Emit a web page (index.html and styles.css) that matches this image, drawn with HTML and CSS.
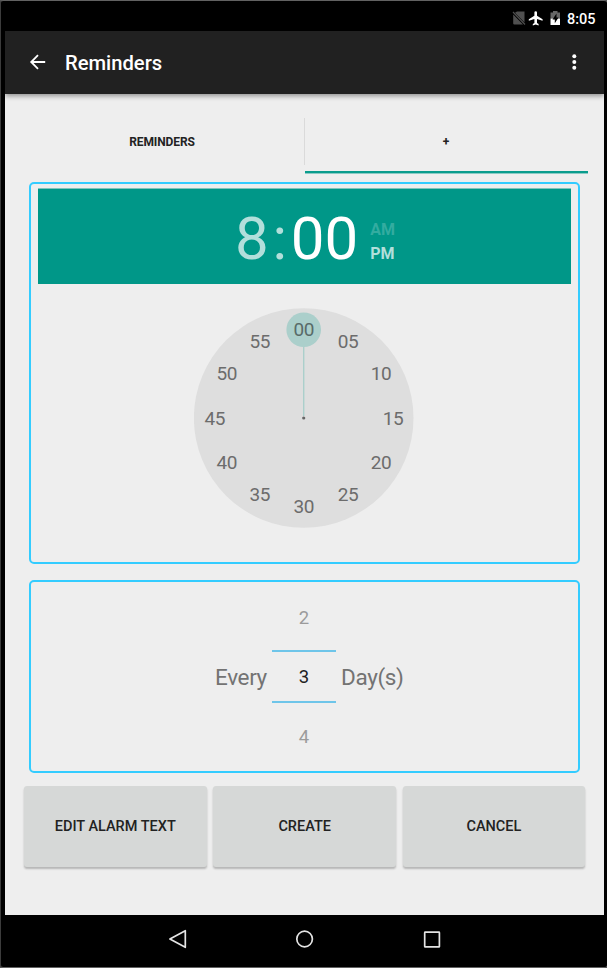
FILE: index.html
```html
<!DOCTYPE html>
<html lang="en">
<head>
<meta charset="utf-8">
<title>Reminders</title>
<link rel="stylesheet" href="styles.css">
</head>
<body>
<div class="device">
  <div class="status-bar">
    <svg class="status-icons" width="52" height="18" viewBox="0 0 52 18">
      <path d="M5 1.500H12.500V12.500L3 2.800Z M1.200 4.500L11 14.500H2.400Q1.200 14.500 1.200 13.500Z" fill="#505050"/>
      <path d="M1 2L13 14.500" stroke="#505050" stroke-width="1.200"/>
      <path d="M30.600 10.800V9.200L25 5.800V2.600Q25 1.200 23.700 1.200T22.400 2.600V5.800L16.800 9.200V10.800L22.400 9.100V12.900L20.800 14.100V15.400L23.700 14.600L26.600 15.400V14.100L25 12.900V9.100Z" fill="#fff"/>
      <path d="M38.500 2.500H41V1H45.500V2.500H48V8.500H38.500Z" fill="#666"/>
      <path d="M38.500 8.500H48V15H38.500Z" fill="#fff"/>
      <path d="M44.500 3.500L40.500 9.400H42.800V13.300L46.500 7.600H44.500Z" fill="#000"/>
    </svg>
    <span class="status-time">8:05</span>
  </div>
  <header class="app-bar">
    <svg class="back" width="18" height="18" viewBox="0 0 18 18"><path d="M16.200 9H2.200M9 2.200L2.200 9L9 15.800" fill="none" stroke="#fff" stroke-width="1.800"/></svg>
    <h1 class="title">Reminders</h1>
    <svg class="more" width="6" height="18" viewBox="0 0 6 18" fill="#fff"><circle cx="3.300" cy="3.200" r="2"/><circle cx="3.300" cy="9" r="2"/><circle cx="3.300" cy="14.800" r="2"/></svg>
  </header>
  <main class="content">
    <nav class="tabs">
      <div class="tab"><span>REMINDERS</span></div>
      <div class="tab tab-active"><span>+</span></div>
    </nav>
    <section class="card time-card">
      <div class="time-header">
        <span class="hour">8</span><span class="colon">:</span><span class="minute">00</span>
        <div class="ampm"><span class="am">AM</span><span class="pm">PM</span></div>
      </div>
      <svg class="clock" width="220" height="220" viewBox="-110 -110 220 220">
        <circle cx="-0.300" r="109.800" fill="#dedede"/>
        <circle cx="-0.300" cy="-88.300" r="17.300" fill="#abcfcb"/>
        <path d="M-0.300 -71.500V-2" stroke="#abcfcb" stroke-width="1.400"/>
        <circle cx="-0.300" r="1.600" fill="#666"/>
        <g class="clock-numbers">
          <text x="-0.300" y="-82" class="selected">00</text>
          <text x="44" y="-70">05</text>
          <text x="77" y="-37.800">10</text>
          <text x="89" y="7.200">15</text>
          <text x="77" y="51">20</text>
          <text x="44" y="83.300">25</text>
          <text x="-0.300" y="95.300">30</text>
          <text x="-44.300" y="83.300">35</text>
          <text x="-77.300" y="51">40</text>
          <text x="-89.300" y="7.200">45</text>
          <text x="-77.300" y="-37.800">50</text>
          <text x="-44.300" y="-70">55</text>
        </g>
      </svg>
    </section>
    <section class="card repeat-card">
      <span class="label every">Every</span>
      <div class="picker">
        <span class="option">2</span>
        <span class="option current">3</span>
        <span class="option last">4</span>
      </div>
      <span class="label days">Day(s)</span>
    </section>
    <div class="actions">
      <button class="button">EDIT ALARM TEXT</button>
      <button class="button">CREATE</button>
      <button class="button">CANCEL</button>
    </div>
  </main>
  <footer class="nav-bar">
    <svg width="20" height="20" viewBox="0 0 20 20"><path d="M17.300 1.700V18.300L1.900 10Z" fill="none" stroke="#e4e4e4" stroke-width="1.700" stroke-linejoin="round"/></svg>
    <svg width="20" height="20" viewBox="0 0 20 20"><circle cx="9.600" cy="10" r="7.800" fill="none" stroke="#e4e4e4" stroke-width="1.700"/></svg>
    <svg width="20" height="20" viewBox="0 0 20 20"><rect x="2.700" y="3.200" width="14.700" height="14.700" rx=".5" fill="none" stroke="#e4e4e4" stroke-width="1.700"/></svg>
  </footer>
</div>
</body>
</html>
```

FILE: styles.css
```css
* { box-sizing: border-box; }

body {
  margin: 0;
  font-family: Roboto, sans-serif;
  background: #555;
}

.device {
  width: 607px;
  height: 968px;
  display: flex;
  flex-direction: column;
  padding: 0 3px 0 4px;
  background: #000;
  border-top: 1px solid #626262;
  border-left: 1px solid #3c3c3c;
  border-bottom: 1px solid #626262;
  border-radius: 3px;
}

.status-bar {
  height: 30px;
  display: flex;
  justify-content: flex-end;
  align-items: center;
  padding: 5px 8px 0 0;
  color: #fff;
}

.status-icons { margin-right: 3px; margin-left: -1px; }

.status-time {
  width: 29px;
  padding-top: 3px;
  font-size: 14.500px;
  line-height: 18px;
  font-weight: 500;
  white-space: nowrap;
}

.app-bar {
  position: relative;
  height: 63px;
  display: flex;
  align-items: center;
  padding: 0 27px 1px 24px;
  background: #212121;
  box-shadow: 0 2px 5px rgba(0, 0, 0, 0.4);
}

.title {
  margin: 0 auto 0 18px;
  padding-top: 2px;
  font-size: 20.200px;
  line-height: 24px;
  font-weight: 500;
  color: #fff;
}

.content {
  height: 821px;
  padding: 16px 16px 0 19px;
  background: #eee;
}

.tabs {
  height: 63px;
  display: flex;
  padding-left: 1px;
}

.tab {
  width: 280px;
  height: 63px;
  display: flex;
  align-items: center;
  justify-content: center;
  padding-top: 1px;
  font-size: 12px;
  font-weight: 700;
  letter-spacing: -0.1px;
  color: #222;
}

.tab:first-child {
  padding-right: 6px;
  background: linear-gradient(#dadada, #dadada) right 8px / 1px 47px no-repeat;
}

.tab-active {
  width: 283px;
  border-bottom: 2px solid #0a9c8d;
  box-shadow: 0 1px #8bcbc4;
  padding: 3px 1px 0 0;
}

.card {
  width: 551px;
  margin-left: 5px;
  border: 2px solid #33ccff;
  border-radius: 5px;
}

.time-card {
  height: 382px;
  margin-top: 9px;
  padding: 5px 7px;
}

.time-header {
  height: 95px;
  display: flex;
  padding: 16px 0 0 197px;
  background: #009788;
  box-shadow: 0 -1px #80c4bc;
  color: #fff;
  font-size: 60px;
  line-height: 68px;
}

.hour { color: #b2dfdb; }

.colon {
  width: 22px;
  text-align: center;
  color: #b2dfdb;
}

.ampm {
  display: flex;
  flex-direction: column;
  margin: 13px 0 0 12px;
  font-size: 16px;
  line-height: 24px;
  font-weight: 700;
}

.am { color: #33aca0; }
.pm { color: #b2dfdb; }

.clock {
  display: block;
  margin: 24px 0 0 156px;
}

.clock-numbers {
  font-size: 19px;
  letter-spacing: -0.400px;
  text-anchor: middle;
  fill: #6c6c6c;
}

.selected { fill: #586b69; }

.repeat-card {
  height: 193px;
  display: flex;
  align-items: center;
  margin-top: 16px;
  padding-left: 184px;
}

.label {
  width: 57px;
  font-size: 22.500px;
  line-height: 28px;
  letter-spacing: -0.350px;
  white-space: nowrap;
  color: #737373;
}

.days { padding-left: 5px; }

.picker {
  width: 64px;
  display: flex;
  flex-direction: column;
  gap: 17px;
}

.option {
  height: 50px;
  line-height: 54px;
  font-size: 18.500px;
  text-align: center;
  color: #9b9b9b;
}

.current {
  height: 53px;
  margin: -8px 0;
  line-height: 51px;
  border: solid #6ec5e9;
  border-width: 2px 0;
  color: #222;
}

.last { line-height: 50px; }

.actions {
  display: grid;
  grid-template-columns: 182.500px 183px 182px;
  gap: 6.700px;
  margin-top: 13px;
}

.button {
  height: 81px;
  padding: 0;
  border: 0;
  border-radius: 3px;
  background: #d6d8d7;
  box-shadow: 0 2px 2px rgba(0, 0, 0, 0.24);
  font-family: inherit;
  font-size: 14.500px;
  font-weight: 500;
  color: #222;
}

.nav-bar {
  flex: 1;
  display: flex;
  justify-content: center;
  align-items: center;
  gap: 107px;
  padding-bottom: 4px;
}
```
